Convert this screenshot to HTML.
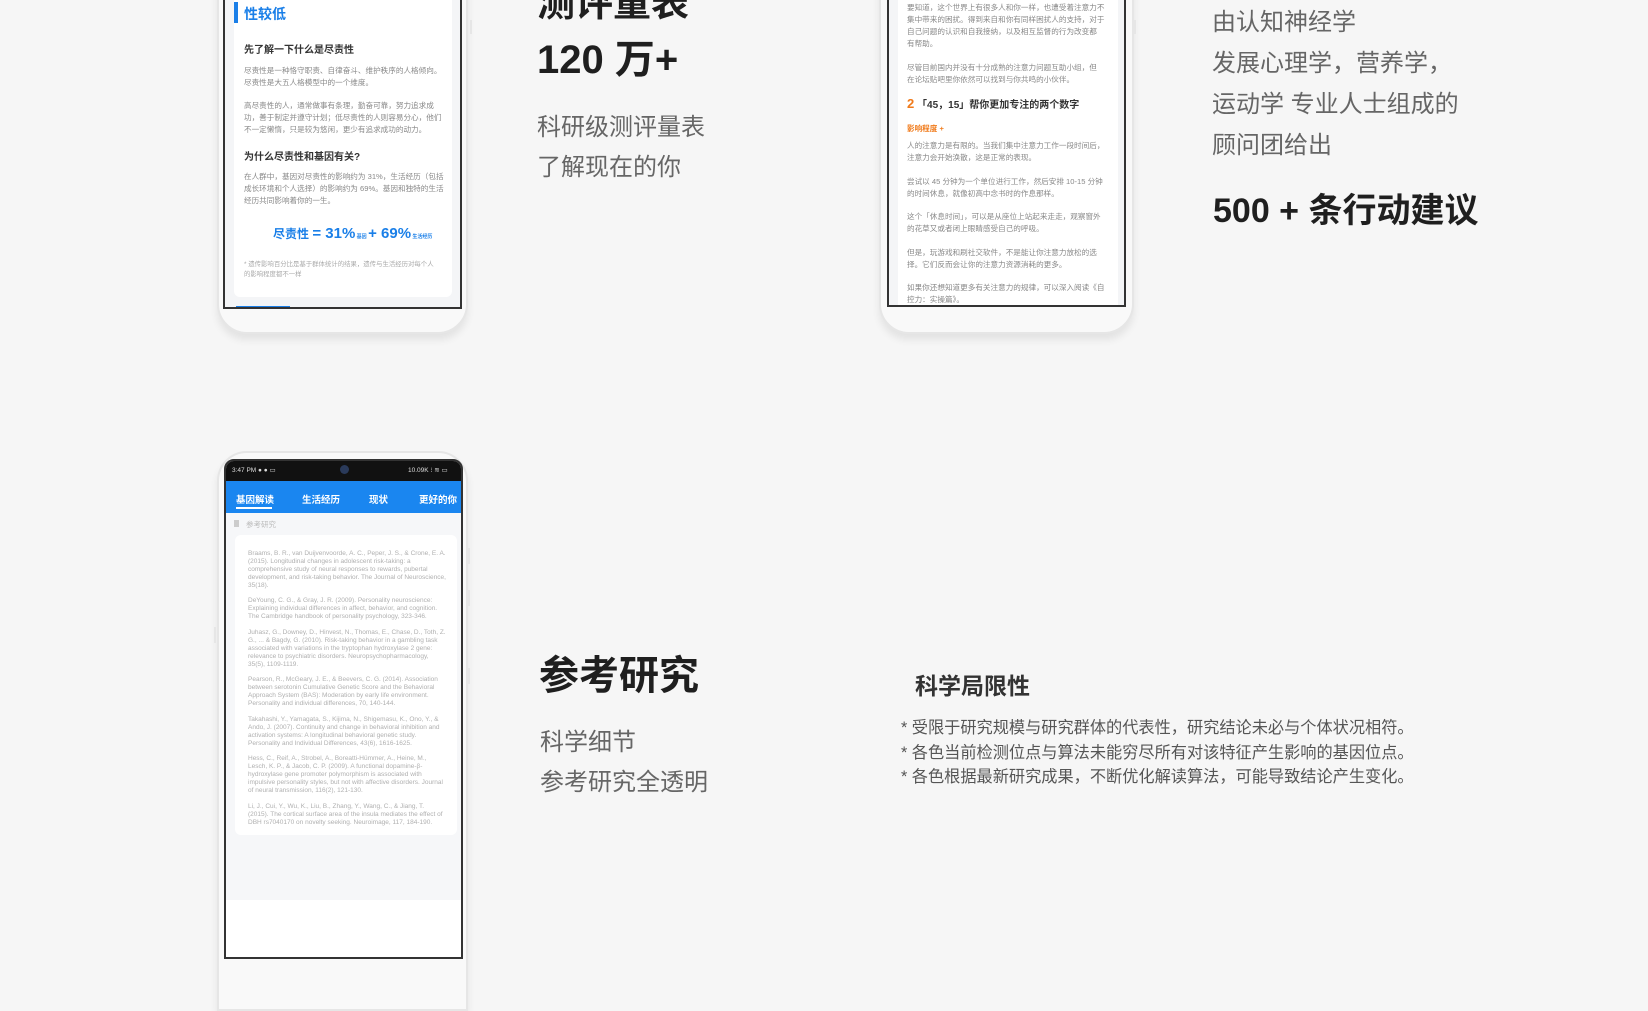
<!DOCTYPE html>
<html><head><meta charset="utf-8">
<style>
*{margin:0;padding:0;box-sizing:border-box}
body{width:1648px;height:973px;overflow:hidden;background:#f6f6f6;font-family:"Liberation Sans","Noto Sans CJK SC",sans-serif;position:relative}
.a{position:absolute;white-space:nowrap}
.body{position:absolute;background:#f9f9f9;border:2px solid #e6e6e6;box-shadow:0 6px 8px rgba(0,0,0,0.08)}
.scr{position:absolute;border:2px solid #333;background:#f4f5f7;overflow:hidden}
.card{position:absolute;background:#fff;border-radius:6px}
.p{color:#888;font-size:7.6px;line-height:12px}
.h{color:#333;font-size:10px;font-weight:bold}
.big{color:#1f1f1f;font-weight:bold}
.sub{color:#666;font-size:24px}
.ref{color:#b0b0b0;font-size:6.5px;line-height:7.9px;margin-bottom:7.9px;white-space:normal}
</style></head><body>

<!-- Phone 1 -->
<div class="body" style="left:217px;top:-40px;width:251px;height:374px;border-radius:0 0 30px 30px"></div>
<div class="scr" style="left:223px;top:-10px;width:239px;height:319px">
  <div class="card" style="left:9px;top:0;width:218px;height:305px"></div>
  <div class="a" style="left:9px;top:10px;width:4px;height:21px;background:#1a7fe8"></div>
  <div class="a" style="left:19px;top:12px;color:#1a7fe8;font-size:14px;font-weight:bold">性较低</div>
  <div class="a h" style="left:19px;top:49px">先了解一下什么是尽责性</div>
  <div class="a p" style="left:19px;top:73px">尽责性是一种恪守职责、自律奋斗、维护秩序的人格倾向。<br>尽责性是大五人格模型中的一个维度。</div>
  <div class="a p" style="left:19px;top:108px">高尽责性的人，通常做事有条理，勤奋可靠，努力追求成<br>功，善于制定并遵守计划；低尽责性的人则容易分心，他们<br>不一定懒惰，只是较为悠闲，更少有追求成功的动力。</div>
  <div class="a h" style="left:19px;top:156px">为什么尽责性和基因有关?</div>
  <div class="a p" style="left:19px;top:179px">在人群中，基因对尽责性的影响约为 31%，生活经历（包括<br>成长环境和个人选择）的影响约为 69%。基因和独特的生活<br>经历共同影响着你的一生。</div>
  <div class="a" style="left:48px;top:233px;color:#1a7fe8;font-weight:bold;font-size:12px">尽责性 <span style="font-size:15px">= 31%</span><span style="font-size:5px"> 基因 </span><span style="font-size:15px">+ 69%</span><span style="font-size:5px"> 生活经历</span></div>
  <div class="a" style="left:19px;top:268px;color:#aaa;font-size:6.4px;line-height:10px">* 遗传影响百分比是基于群体统计的结果，遗传与生活经历对每个人<br>的影响程度都不一样</div>
  <div class="a" style="left:11px;top:314px;width:54px;height:4px;background:#1a7fe8"></div>
</div>
<div class="a" style="left:470px;top:20px;width:2px;height:14px;background:#e6e6e6"></div>

<!-- Phone 2 -->
<div class="body" style="left:879px;top:-40px;width:255px;height:374px;border-radius:0 0 30px 30px"></div>
<div class="scr" style="left:887px;top:-10px;width:239px;height:317px">
  <div class="card" style="left:9px;top:0;width:220px;height:315px;border-radius:0"></div>
  <div class="a p" style="left:18px;top:10px">要知道，这个世界上有很多人和你一样，也遭受着注意力不<br>集中带来的困扰。得到来自和你有同样困扰人的支持，对于<br>自己问题的认识和自我接纳，以及相互监督的行为改变都<br>有帮助。</div>
  <div class="a p" style="left:18px;top:70px">尽管目前国内并没有十分成熟的注意力问题互助小组，但<br>在论坛贴吧里你依然可以找到与你共鸣的小伙伴。</div>
  <div class="a" style="left:18px;top:104px;font-size:10px;font-weight:bold;color:#333"><span style="color:#f07a1a;font-size:13px">2</span> 「45，15」帮你更加专注的两个数字</div>
  <div class="a" style="left:18px;top:131px;color:#f07a1a;font-size:7.6px;font-weight:bold">影响程度 +</div>
  <div class="a p" style="left:18px;top:148px">人的注意力是有限的。当我们集中注意力工作一段时间后，<br>注意力会开始涣散，这是正常的表现。</div>
  <div class="a p" style="left:18px;top:184px">尝试以 45 分钟为一个单位进行工作，然后安排 10-15 分钟<br>的时间休息，就像初高中念书时的作息那样。</div>
  <div class="a p" style="left:18px;top:219px">这个「休息时间」，可以是从座位上站起来走走，观察窗外<br>的花草又或者闭上眼睛感受自己的呼吸。</div>
  <div class="a p" style="left:18px;top:255px">但是，玩游戏和刷社交软件，不是能让你注意力放松的选<br>择。它们反而会让你的注意力资源消耗的更多。</div>
  <div class="a p" style="left:18px;top:290px">如果你还想知道更多有关注意力的规律，可以深入阅读《自<br>控力：实操篇》。</div>
</div>
<div class="a" style="left:1134px;top:20px;width:2px;height:14px;background:#e6e6e6"></div>

<!-- Texts top -->
<div class="a big" style="left:537px;top:-18px;font-size:38px;line-height:44px">测评量表</div>
<div class="a big" style="left:537px;top:38px;font-size:40px;line-height:44px">120 万+</div>
<div class="a sub" style="left:537px;top:113px;line-height:30px">科研级测评量表</div>
<div class="a sub" style="left:537px;top:153px;line-height:30px">了解现在的你</div>

<div class="a sub" style="left:1212px;top:2px;line-height:41px">由认知神经学<br>发展心理学，营养学，<br>运动学 专业人士组成的<br>顾问团给出</div>
<div class="a big" style="left:1213px;top:191px;font-size:34px;line-height:40px">500 + 条行动建议</div>

<!-- Phone 3 -->
<div class="body" style="left:217px;top:451px;width:251px;height:560px;border-radius:30px 30px 0 0"></div>
<div class="a" style="left:214px;top:627px;width:2px;height:16px;background:#e6e6e6"></div>
<div class="a" style="left:468px;top:548px;width:2px;height:16px;background:#e6e6e6"></div>
<div class="a" style="left:468px;top:590px;width:2px;height:16px;background:#e6e6e6"></div>
<div class="a" style="left:468px;top:668px;width:2px;height:16px;background:#e6e6e6"></div>
<div class="scr" style="left:224px;top:459px;width:239px;height:500px;border-radius:10px 10px 0 0;background:#fff">
  <div class="a" style="left:0;top:0;width:239px;height:20px;background:#111"></div>
  <div class="a" style="left:6px;top:5px;color:#ddd;font-size:6.5px">3:47 PM ● ● ▭</div>
  <div class="a" style="left:114px;top:4px;width:9px;height:9px;border-radius:50%;background:#2a3a5a"></div>
  <div class="a" style="left:182px;top:5px;color:#ddd;font-size:6.5px">10.09K ⁝ ≋ ▭</div>
  <div class="a" style="left:0;top:20px;width:239px;height:32px;background:#1a86f0"></div>
  <div class="a" style="left:10px;top:31px;color:#fff;font-size:9.5px;font-weight:bold">基因解读</div>
  <div class="a" style="left:10px;top:46px;width:36px;height:2px;background:#fff"></div>
  <div class="a" style="left:76px;top:31px;color:#fff;font-size:9.5px;font-weight:bold">生活经历</div>
  <div class="a" style="left:143px;top:31px;color:#fff;font-size:9.5px;font-weight:bold">现状</div>
  <div class="a" style="left:193px;top:31px;color:#fff;font-size:9.5px;font-weight:bold">更好的你</div>
  <div class="a" style="left:0;top:52px;width:239px;height:387px;background:#f6f7f9"></div>
  <div class="a" style="left:8px;top:59px;width:5px;height:7px;background:#ccc"></div>
  <div class="a" style="left:20px;top:58px;color:#bbb;font-size:7.5px">参考研究</div>
  <div class="card" style="left:9px;top:74px;width:222px;height:300px"></div>
  <div class="a" style="left:22px;top:89px;width:198px;white-space:normal">
    <div class="ref">Braams, B. R., van Duijvenvoorde, A. C., Peper, J. S., &amp; Crone, E. A. (2015). Longitudinal changes in adolescent risk-taking: a comprehensive study of neural responses to rewards, pubertal development, and risk-taking behavior. The Journal of Neuroscience, 35(18).</div>
    <div class="ref">DeYoung, C. G., &amp; Gray, J. R. (2009). Personality neuroscience: Explaining individual differences in affect, behavior, and cognition. The Cambridge handbook of personality psychology, 323-346.</div>
    <div class="ref">Juhasz, G., Downey, D., Hinvest, N., Thomas, E., Chase, D., Toth, Z. G., ... &amp; Bagdy, G. (2010). Risk-taking behavior in a gambling task associated with variations in the tryptophan hydroxylase 2 gene: relevance to psychiatric disorders. Neuropsychopharmacology, 35(5), 1109-1119.</div>
    <div class="ref">Pearson, R., McGeary, J. E., &amp; Beevers, C. G. (2014). Association between serotonin Cumulative Genetic Score and the Behavioral Approach System (BAS): Moderation by early life environment. Personality and individual differences, 70, 140-144.</div>
    <div class="ref">Takahashi, Y., Yamagata, S., Kijima, N., Shigemasu, K., Ono, Y., &amp; Ando, J. (2007). Continuity and change in behavioral inhibition and activation systems: A longitudinal behavioral genetic study. Personality and Individual Differences, 43(6), 1616-1625.</div>
    <div class="ref">Hess, C., Reif, A., Strobel, A., Boreatti-Hümmer, A., Heine, M., Lesch, K. P., &amp; Jacob, C. P. (2009). A functional dopamine-β-hydroxylase gene promoter polymorphism is associated with impulsive personality styles, but not with affective disorders. Journal of neural transmission, 116(2), 121-130.</div>
    <div class="ref">Li, J., Cui, Y., Wu, K., Liu, B., Zhang, Y., Wang, C., &amp; Jiang, T. (2015). The cortical surface area of the insula mediates the effect of DBH rs7040170 on novelty seeking. Neuroimage, 117, 184-190.</div>
  </div>
</div>

<!-- Bottom texts -->
<div class="a big" style="left:539px;top:653px;font-size:40px;line-height:46px">参考研究</div>
<div class="a sub" style="left:540px;top:728px;line-height:30px">科学细节</div>
<div class="a sub" style="left:540px;top:768px;line-height:30px">参考研究全透明</div>
<div class="a" style="left:915px;top:672px;font-size:23px;font-weight:bold;color:#333;line-height:28px">科学局限性</div>
<div class="a" style="left:901px;top:716px;font-size:16.2px;color:#555;line-height:24.5px">* 受限于研究规模与研究群体的代表性，研究结论未必与个体状况相符。<br>* 各色当前检测位点与算法未能穷尽所有对该特征产生影响的基因位点。<br>* 各色根据最新研究成果，不断优化解读算法，可能导致结论产生变化。</div>

</body></html>
